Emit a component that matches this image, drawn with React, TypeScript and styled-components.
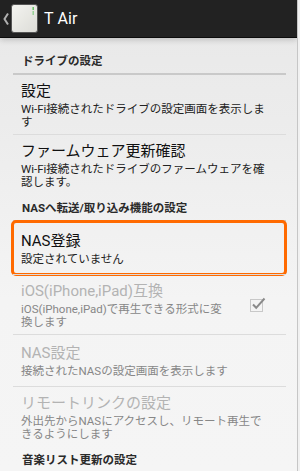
import React from "react";
import styled, { createGlobalStyle } from "styled-components";

const Global = createGlobalStyle`
  html, body { margin: 0; padding: 0; width: 300px; height: 471px; overflow: hidden; background: #f1f1f1; }
  * { box-sizing: border-box; }
`;

const Screen = styled.div`
  width: 298px;
  height: 471px;
  border-right: 1px solid #c6c6c6;
  background: linear-gradient(#e8e8e8 0px, #ececec 120px, #f4f4f4 300px, #f5f5f5 471px);
  font-family: Roboto, "Noto Sans CJK JP", "Noto Sans", sans-serif;
  overflow: hidden;
  display: flex;
  flex-direction: column;
`;

const ActionBar = styled.div`
  height: 38px;
  flex: none;
  background: #222222;
  border-bottom: 1px solid #0c0c0c;
  display: flex;
  align-items: center;
  box-shadow: 0 2px 6px rgba(0, 0, 0, 0.18);
  position: relative;
  z-index: 1;
`;

const Back = styled.svg`
  width: 8px;
  height: 14px;
  margin-left: 2px;
  flex: none;
`;

const AppIcon = styled.svg`
  width: 27px;
  height: 29px;
  margin-left: 1px;
  flex: none;
`;

const Title = styled.div`
  color: #ffffff;
  font-size: 16px;
  margin-left: 6px;
  letter-spacing: 0.1px;
`;

const List = styled.div`
  padding: 9px 11px 0 13px;
  display: flex;
  flex-direction: column;
`;

const Category = styled.div`
  padding: 6px 8px 4px 9px;
  font-size: 11.5px;
  line-height: 16px;
  font-weight: bold;
  color: #2a2a2a;
  border-bottom: 2px solid #c9c9c9;
`;

const Row = styled.div<{ $divider?: boolean }>`
  min-height: 52px;
  padding: 6px 16px 6px 8px;
  display: flex;
  align-items: center;
  border-top: ${(p) => (p.$divider ? "1px solid #dcdcdc" : "none")};
  position: relative;
`;

const Texts = styled.div`
  flex: 1;
  min-width: 0;
  display: flex;
  flex-direction: column;
`;

const ItemTitle = styled.div<{ $disabled?: boolean }>`
  font-size: 15px;
  line-height: 20px;
  color: ${(p) => (p.$disabled ? "#b3b3b3" : "#111111")};
`;

const Summary = styled.div<{ $disabled?: boolean }>`
  margin-top: 2px;
  font-size: 11.5px;
  line-height: 12.5px;
  color: ${(p) => (p.$disabled ? "#878787" : "#222222")};
`;

const Widget = styled.div`
  flex: none;
  width: 52px;
  margin-right: -14px;
  display: flex;
  justify-content: center;
  align-items: center;
`;

const Highlight = styled.div`
  position: relative;
  &::after {
    content: "";
    position: absolute;
    left: -2px;
    right: -1px;
    top: -2px;
    bottom: -2px;
    border: 3px solid #ff6a00;
    border-radius: 5px;
    pointer-events: none;
  }
`;

function Check() {
  return (
    <svg width="17" height="15" viewBox="0 0 17 15">
      <rect x="0.5" y="2.5" width="12" height="12" fill="none" stroke="#c8c8c8" strokeWidth="1" />
      <path d="M3 7.5 L6.2 10.8 L14.5 1.5" fill="none" stroke="#8a8a8a" strokeWidth="2" />
    </svg>
  );
}

export default function App() {
  return (
    <>
      <Global />
      <Screen>
        <ActionBar>
          <Back viewBox="0 0 8 14">
            <path d="M6 1.5 L2.5 7 L6 12.5" fill="none" stroke="#b0b0b0" strokeWidth="2" />
          </Back>
          <AppIcon viewBox="0 0 27 29">
            <defs>
              <linearGradient id="ig" x1="0" y1="0" x2="1" y2="1">
                <stop offset="0" stopColor="#f4f4f0" />
                <stop offset="1" stopColor="#dcdcd7" />
              </linearGradient>
            </defs>
            <rect x="0.5" y="0.5" width="26" height="28" rx="2.5" fill="url(#ig)" stroke="#555" strokeWidth="1" />
            <rect x="21.5" y="3" width="1.4" height="3" fill="#5cbf5c" />
            <rect x="21.5" y="7" width="1.4" height="4" fill="#8fd08f" />
          </AppIcon>
          <Title>T Air</Title>
        </ActionBar>
        <List>
          <Category>ドライブの設定</Category>
          <Row>
            <Texts>
              <ItemTitle>設定</ItemTitle>
              <Summary>Wi-Fi接続されたドライブの設定画面を表示します</Summary>
            </Texts>
          </Row>
          <Row $divider>
            <Texts>
              <ItemTitle>ファームウェア更新確認</ItemTitle>
              <Summary>Wi-Fi接続されたドライブのファームウェアを確認します。</Summary>
            </Texts>
          </Row>
          <Category>NASへ転送/取り込み機能の設定</Category>
          <Highlight>
            <Row>
              <Texts>
                <ItemTitle>NAS登録</ItemTitle>
                <Summary>設定されていません</Summary>
              </Texts>
            </Row>
          </Highlight>
          <Row $divider>
            <Texts>
              <ItemTitle $disabled>iOS(iPhone,iPad)互換</ItemTitle>
              <Summary $disabled>iOS(iPhone,iPad)で再生できる形式に変換します</Summary>
            </Texts>
            <Widget>
              <Check />
            </Widget>
          </Row>
          <Row $divider>
            <Texts>
              <ItemTitle $disabled>NAS設定</ItemTitle>
              <Summary $disabled>接続されたNASの設定画面を表示します</Summary>
            </Texts>
          </Row>
          <Row $divider>
            <Texts>
              <ItemTitle $disabled>リモートリンクの設定</ItemTitle>
              <Summary $disabled>外出先からNASにアクセスし、リモート再生できるようにします</Summary>
            </Texts>
          </Row>
          <Category>音楽リスト更新の設定</Category>
        </List>
      </Screen>
    </>
  );
}
